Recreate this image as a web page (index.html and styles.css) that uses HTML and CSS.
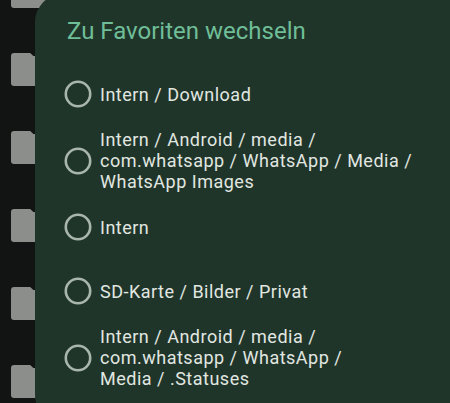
FILE: index.html
```html
<!DOCTYPE html>
<html lang="de">
<head>
<meta charset="utf-8">
<title>Zu Favoriten wechseln</title>
<link rel="stylesheet" href="styles.css">
</head>
<body>
<div class="screen">
  <div class="folders">
    <div class="folder"></div>
    <div class="folder"></div>
    <div class="folder"></div>
    <div class="folder"></div>
    <div class="folder"></div>
    <div class="folder"></div>
  </div>
  <div class="dialog">
    <h1 class="title">Zu Favoriten wechseln</h1>
    <ul class="options">
      <li class="option">
        <svg class="radio" viewBox="0 0 28 28" width="28" height="28"><circle cx="14" cy="14" r="12.2" fill="none" stroke="#a9b6ac" stroke-width="2.6"/></svg>
        <span class="label">Intern / Download</span>
      </li>
      <li class="option">
        <svg class="radio" viewBox="0 0 28 28" width="28" height="28"><circle cx="14" cy="14" r="12.2" fill="none" stroke="#a9b6ac" stroke-width="2.6"/></svg>
        <span class="label">Intern / Android / media /<br>com.whatsapp / WhatsApp / Media /<br>WhatsApp Images</span>
      </li>
      <li class="option">
        <svg class="radio" viewBox="0 0 28 28" width="28" height="28"><circle cx="14" cy="14" r="12.2" fill="none" stroke="#a9b6ac" stroke-width="2.6"/></svg>
        <span class="label">Intern</span>
      </li>
      <li class="option">
        <svg class="radio" viewBox="0 0 28 28" width="28" height="28"><circle cx="14" cy="14" r="12.2" fill="none" stroke="#a9b6ac" stroke-width="2.6"/></svg>
        <span class="label">SD-Karte / Bilder / Privat</span>
      </li>
      <li class="option">
        <svg class="radio" viewBox="0 0 28 28" width="28" height="28"><circle cx="14" cy="14" r="12.2" fill="none" stroke="#a9b6ac" stroke-width="2.6"/></svg>
        <span class="label">Intern / Android / media /<br>com.whatsapp / WhatsApp /<br>Media / .Statuses</span>
      </li>
    </ul>
  </div>
</div>
</body>
</html>
```
FILE: styles.css
```css
html, body {
  margin: 0;
  padding: 0;
  background: #111413;
}

.screen {
  position: relative;
  width: 450px;
  height: 403px;
  overflow: hidden;
  font-family: Roboto, "Noto Sans", sans-serif;
}

.folders {
  display: flex;
  flex-direction: column;
  gap: 45px;
  margin-top: -25px;
  padding-left: 11px;
}

.folder {
  position: relative;
  width: 40px;
  height: 33px;
  background: #8c8e8b;
  border-radius: 3px;
  clip-path: polygon(0 0, 48% 0, 56% 9%, 100% 9%, 100% 100%, 0 100%);
}

.dialog {
  position: absolute;
  left: 35px;
  top: -6px;
  right: -12px;
  bottom: -20px;
  background: #20352a;
  border-radius: 28px;
  padding-top: 21px;
  box-sizing: border-box;
}

.title {
  margin: 0 0 15px 32px;
  font-size: 24px;
  line-height: 32px;
  font-weight: 400;
  color: #6fbe97;
}

.options {
  list-style: none;
  margin: 0;
  padding: 0;
}

.option {
  display: flex;
  align-items: center;
  gap: 8px;
  min-height: 64px;
  padding: 3px 0 3px 29px;
  box-sizing: border-box;
}

.radio {
  flex: none;
  display: block;
}

.label {
  font-size: 18px;
  line-height: 21px;
  letter-spacing: 0.5px;
  color: #e1e7e1;
}
```
